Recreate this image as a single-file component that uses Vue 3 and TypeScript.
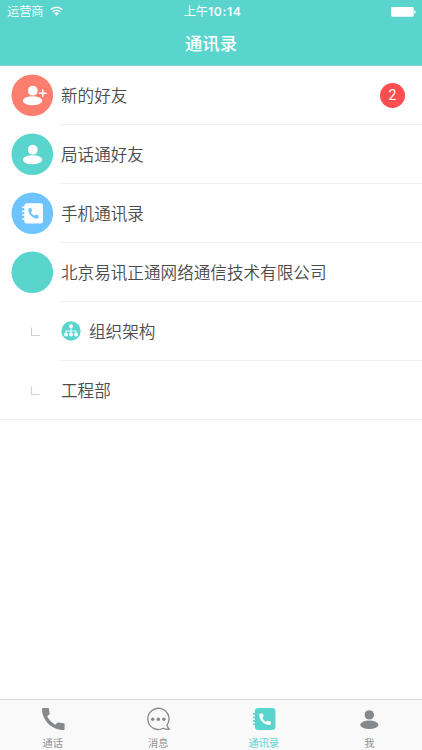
<script setup lang="ts">
type RowIcon = 'add' | 'person' | 'book' | 'blank' | 'org' | 'none'

interface Row {
  label: string
  icon: RowIcon
  nested?: boolean
  badge?: number
}

const rows: Row[] = [
  { label: '新的好友', icon: 'add', badge: 2 },
  { label: '局话通好友', icon: 'person' },
  { label: '手机通讯录', icon: 'book' },
  { label: '北京易讯正通网络通信技术有限公司', icon: 'blank' },
  { label: '组织架构', icon: 'org', nested: true },
  { label: '工程部', icon: 'none', nested: true },
]

const tabs = [
  { label: '通话', icon: 'phone' },
  { label: '消息', icon: 'chat' },
  { label: '通讯录', icon: 'book', active: true },
  { label: '我', icon: 'me' },
]

const handset =
  'M.5 0h2.200q.6 0 .7.600l.3 1.900q.1.500-.3.800l-.8.700q1.100 2.300 3.300 3.500l.8-.8q.3-.3.800-.2l2.100.4q.6.100.6.700v2.100q0 .6-.7.600C4 10.300 0 6 0 .700Q0 0 .5 0z'
</script>

<template>
  <div class="screen">
    <header class="top">
      <div class="status">
        <div class="carrier">
          <span>运营商</span>
          <svg class="wifi" viewBox="0 0 13 10" width="13" height="10">
            <path d="M.8 3.6a8.1 8.1 0 0 1 11.4 0M2.8 5.8a5.2 5.2 0 0 1 7.4 0" fill="none" stroke="#fff" stroke-width="1.4" />
            <path d="M4.2 7.3a3.3 3.3 0 0 1 4.6 0L6.5 9.7z" fill="#fff" />
          </svg>
        </div>
        <div class="time">上午<span class="clock">10:14</span></div>
        <div class="power">
          <svg viewBox="0 0 25 10" width="25" height="10">
            <rect width="22.7" height="9.7" rx="1.4" fill="#fff" />
            <path d="M23.3 3.2c1.9.3 1.9 3.1 0 3.4z" fill="#fff" />
          </svg>
        </div>
      </div>
      <h1 class="title">通讯录</h1>
    </header>

    <main class="list">
      <div v-for="row in rows" :key="row.label" class="row">
        <div class="lead">
          <svg v-if="row.nested" class="branch" viewBox="0 0 10 10" width="10" height="10">
            <path d="M1.500 .500v8h8.200" fill="none" stroke="#d0d0d0" stroke-width="1.200" />
          </svg>
          <svg v-else class="avatar" :class="row.icon" viewBox="0 0 42 42" width="42" height="42">
            <circle class="disc" cx="21.300" cy="21.200" r="20.800" />
            <g v-if="row.icon === 'add' || row.icon === 'person'" fill="#fff">
              <circle cx="21.800" cy="16.700" r="4.900" />
              <ellipse cx="21.500" cy="26.700" rx="9.700" ry="4.500" />
              <path v-if="row.icon === 'add'" d="M31 15.500h1.500v3h3V20h-3v3H31v-3h-3v-1.500h3z" />
            </g>
            <g v-else-if="row.icon === 'book'">
              <rect x="13.300" y="11.200" width="18.700" height="20.400" rx="3.200" fill="#fff" />
              <path d="M11.700 15.300h4M11.700 19.200h4M11.700 23.100h4M11.700 27h4" stroke="#fff" stroke-width="1.500" stroke-linecap="round" />
              <path class="handset" transform="translate(17.300 16.200)" :d="handset" />
            </g>
          </svg>
        </div>
        <div class="body">
          <svg v-if="row.icon === 'org'" class="org" viewBox="0 0 20 20" width="20" height="20">
            <circle cx="10" cy="10" r="9.700" fill="#59d5ce" />
            <path d="M10 5v9M4.900 13v-3h10.200v3" fill="none" stroke="#fff" stroke-width=".9" />
            <g fill="#fff">
              <circle cx="10" cy="5.300" r="2" />
              <circle cx="5" cy="13.400" r="2" />
              <circle cx="10" cy="13.400" r="2" />
              <circle cx="15" cy="13.400" r="2" />
            </g>
          </svg>
          <span class="label">{{ row.label }}</span>
          <span v-if="row.badge" class="badge">{{ row.badge }}</span>
        </div>
      </div>
    </main>

    <nav class="tabs">
      <div v-for="tab in tabs" :key="tab.label" class="tab" :class="{ active: tab.active }">
        <svg viewBox="0 0 24 24" width="24" height="24" fill="currentColor">
          <path v-if="tab.icon === 'phone'" d="M2 1h5q.9 0 1 .9l.6 4.500q.1.700-.4 1.200L6.200 9.500q2.700 5.300 7.900 8.300l2.200-2q.5-.5 1.200-.4l5.200.8q.9.200.9 1.100v4.600q0 1.100-1.100 1.100C10.500 23 1 13 1 2Q1 1 2 1z" />
          <g v-else-if="tab.icon === 'chat'">
            <path d="M21 18.100A10.600 10.600 0 1 0 17.500 21.200Q19.900 22.600 23.400 22.200Q21.500 20.800 21 18.100z" fill="none" stroke="currentColor" stroke-width="1.300" stroke-linejoin="round" />
            <circle cx="6.700" cy="12.200" r="1.700" />
            <circle cx="12.300" cy="12.200" r="1.700" />
            <circle cx="17.900" cy="12.200" r="1.700" />
          </g>
          <g v-else-if="tab.icon === 'book'">
            <rect x="2.900" y="1" width="20.500" height="22" rx="3.300" />
            <path d="M1.700 6.800h3M1.700 10.300h3M1.700 13.800h3M1.700 17.300h3" stroke="currentColor" stroke-width="1.700" stroke-linecap="round" />
            <path transform="translate(7.300 6.500) scale(1.120)" :d="handset" fill="#fff" />
          </g>
          <g v-else>
            <circle cx="12.300" cy="7.900" r="4.700" />
            <ellipse cx="12.300" cy="17.800" rx="9.100" ry="4.300" />
          </g>
        </svg>
        <span>{{ tab.label }}</span>
      </div>
    </nav>
  </div>
</template>

<style>
body {
  margin: 0;
  background: #fff;
}
</style>

<style scoped>
.screen {
  display: flex;
  flex-direction: column;
  width: 422px;
  height: 750px;
  overflow: hidden;
  background: #fff;
  color: #4c4c4c;
  font-family: Roboto, "Noto Sans CJK SC", sans-serif;
}

.top {
  box-sizing: border-box;
  height: 66px;
  border-bottom: 1px solid #80d2ce;
  background: #59d5ce;
  color: #fff;
}

.status {
  display: grid;
  grid-template-columns: 1fr auto 1fr;
  align-items: center;
  height: 22px;
  padding: 0 6px 0 7px;
  font-size: 12.2px;
  line-height: 22px;
}

.carrier {
  display: flex;
  align-items: center;
  gap: 6px;
  font-weight: 350;
}

.carrier span {
  padding-top: 1px;
}

.wifi {
  margin-top: -1px;
}

.time {
  padding-left: 2px;
  font-family: Inter, "Noto Sans CJK SC", sans-serif;
  font-weight: 400;
}

.clock {
  font-weight: 600;
  letter-spacing: 0.6px;
}

.power {
  display: flex;
  justify-content: flex-end;
}

.title {
  margin: 0;
  font-size: 17.3px;
  font-weight: 500;
  line-height: 44px;
  text-align: center;
}

.list {
  flex: 1;
}

.row {
  display: flex;
  height: 59px;
}

.row:last-child {
  border-bottom: 1px solid #f0f0f0;
  height: 58px;
}

.row:last-child .body {
  border-bottom: 0;
}

.lead {
  display: flex;
  align-items: center;
  box-sizing: border-box;
  width: 61px;
  padding: 0 0 1px 11px;
}

.branch {
  margin-left: 19px;
  margin-top: 2px;
}

.disc,
.handset {
  fill: #59d5ce;
}

.add .disc {
  fill: #fd7d6e;
}

.book .disc,
.book .handset {
  fill: #6ec4ff;
}

.body {
  display: flex;
  flex: 1;
  align-items: center;
  border-bottom: 1px solid #f0f0f0;
  padding-right: 17px;
}

.org {
  margin-right: 8px;
}

.label {
  padding-top: 3px;
  font-size: 16.6px;
  font-weight: 350;
  line-height: 24px;
}

.badge {
  width: 25px;
  height: 25px;
  margin-left: auto;
  border-radius: 50%;
  background: #ff4d50;
  color: #fff;
  font-size: 14px;
  line-height: 25px;
  text-align: center;
}

.tabs {
  display: grid;
  grid-template-columns: repeat(4, 1fr);
  box-sizing: border-box;
  height: 51px;
  border-top: 1px solid #d9d9d9;
  background: #f9f9f9;
}

.tab {
  display: flex;
  flex-direction: column;
  align-items: center;
  padding-top: 7px;
  color: #85898c;
  font-size: 10.2px;
  line-height: 14px;
}

.tab span {
  margin-top: 6px;
  color: #929292;
}

.tab.active,
.tab.active span {
  color: #59d5ce;
}
</style>
